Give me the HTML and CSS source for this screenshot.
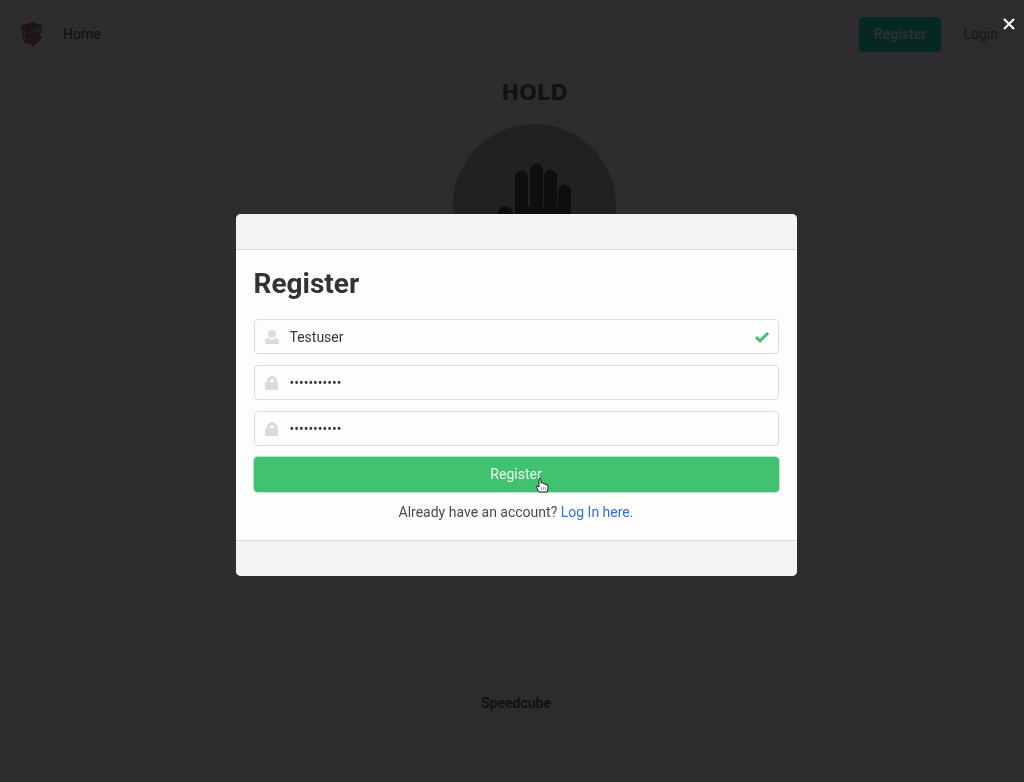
FILE: index.html
```html
<!DOCTYPE html>
<html lang="en">
<head>
<meta charset="utf-8">
<meta name="viewport" content="width=device-width, initial-scale=1">
<title>Speedcube</title>
<link rel="stylesheet" href="styles.css">
</head>
<body>
<div class="page">
  <nav class="navbar">
    <a class="brand" href="#" aria-label="Speedcube">
      <svg width="24" height="26" viewBox="0 0 24 26">
        <path fill="#151417" d="M12 1l4 1 1 1 5 1v4l-1 11-4 3-5 3-9-5L1 7l1-3 5-1z"/>
        <path fill="#2e1019" d="M11 1l4 1-3 2-4-1zM6 4l4 1-3 2-4-1zM16 4l4 1-3 2-4-1zM11 6l4 1-3 2-4-1zM6 11l5 1v4l-5-1zM7 17l4 1v5l-4-2zM12 13l5-1v4l-5 2zM12 18l3-1v4l-3 2zM17 14l3-1-1 4-2 1z"/>
        <path fill="#0d2c1f" d="M1 7l4 2 1 4-4-2zM3 15l3 1v4l-3-2zM13 9l4-1v3l-4 1zM18 7l4-1-1 5-3 1zM7 21l3 1v2l-3-2z"/>
        <path fill="#182052" d="M10 10h2v2h-2zM16 18l3-1v2l-2 2zM3 12l2 1v1l-2-1z"/>
        <path fill="#38382a" d="M20 12h1v3h-1zM4 12h1v1H4zM11 23h1v2h-1z"/>
      </svg>
    </a>
    <a class="nav-link" href="#">Home</a>
    <div class="nav-actions">
      <button class="nav-button nav-button-primary" type="button">Register</button>
      <button class="nav-button" type="button">Login</button>
    </div>
  </nav>
  <main class="timer">
    <h2 class="timer-status">HOLD</h2>
    <div class="timer-pad">
      <svg width="163" height="163" viewBox="0 0 163 163" aria-hidden="true">
        <path fill="#0e0d0f" d="M62 95V53a6.500 6.500 0 0 1 13 0v29h2V46a6.500 6.500 0 0 1 13 0v36h1V52a6.500 6.500 0 0 1 13 0v30h1V67a6.500 6.500 0 0 1 13 0v36c0 14-8 22-22 22H82c-10 0-16-5-21-12L46 93c-5-8 6-15 12-8z"/>
      </svg>
    </div>
  </main>
  <footer class="footer"><strong>Speedcube</strong></footer>
</div>

<div class="modal">
  <section class="modal-card" role="dialog" aria-modal="true" aria-labelledby="register-title">
    <header class="modal-bar modal-head"></header>
    <form class="modal-body">
      <h1 class="title" id="register-title">Register</h1>
      <div class="field">
        <svg class="field-icon" width="14" height="16" viewBox="0 0 14 16" aria-hidden="true"><circle cx="7" cy="5" r="4"/><path d="M3 9c2 2 6 2 8 0 2 0 3 2 3 4v1q0 1-1 1H1q-1 0-1-1v-1c0-2 1-4 3-4z"/></svg>
        <input class="input" type="text" aria-label="Username" value="Testuser">
        <svg class="field-check" width="16" height="16" viewBox="0 0 16 16" aria-hidden="true"><path d="M2 8l4 4 8-8"/></svg>
      </div>
      <div class="field">
        <svg class="field-icon" width="14" height="16" viewBox="0 0 14 16" aria-hidden="true"><path fill-rule="evenodd" d="M2 7V6a5 5 0 0 1 10 0v1q1 0 1 1v6q0 1-1 1H1q-1 0-1-1V8q0-1 1-1zm3 0h4V6a2 2 0 0 0-4 0z"/></svg>
        <input class="input" type="password" aria-label="Password" value="speedcubers">
      </div>
      <div class="field">
        <svg class="field-icon" width="14" height="16" viewBox="0 0 14 16" aria-hidden="true"><path fill-rule="evenodd" d="M2 7V6a5 5 0 0 1 10 0v1q1 0 1 1v6q0 1-1 1H1q-1 0-1-1V8q0-1 1-1zm3 0h4V6a2 2 0 0 0-4 0z"/></svg>
        <input class="input" type="password" aria-label="Confirm password" value="speedcubers">
      </div>
      <div class="submit-row">
        <button class="submit" type="button">Register</button>
        <svg class="pointer" width="14" height="16" viewBox="0 0 14 16" aria-hidden="true"><path fill="#fff" stroke="#222" d="M4 9V2q1-2 2 0v4q2-1 3 1 1-1 2 1 2-1 2 1v3l-1 3H4l-3-5q0-2 3 0z"/><path fill="none" stroke="#aaa" d="M6.500 10v3M8.500 10v3M10.500 10v3"/></svg>
      </div>
      <p class="switch">Already have an account? <a href="#">Log In here.</a></p>
    </form>
    <footer class="modal-bar modal-foot"></footer>
  </section>
  <button class="close" type="button" aria-label="Close"><svg width="12" height="12" viewBox="0 0 12 12"><path d="M1 1l10 10M11 1 1 11"/></svg></button>
</div>
</body>
</html>
```
FILE: styles.css
```css
*, *::before, *::after { box-sizing: border-box; }

body {
  margin: 0;
  font: 14px/21px Roboto, "Liberation Sans", sans-serif;
  color: #4a4a4a;
  background: #2e2c2f;
}

h1, h2, p { margin: 0; }
button, input { font: inherit; }
svg { display: block; }

.page {
  display: flex;
  flex-direction: column;
  min-height: 100vh;
  color: #121113;
}

.navbar {
  display: flex;
  align-items: center;
  height: 68px;
  padding: 0 12px 0 20px;
}

.nav-link {
  margin-left: 19px;
  color: #121113;
  text-decoration: none;
}

.nav-actions {
  display: flex;
  gap: 8px;
  margin-left: auto;
}

.nav-button {
  height: 35px;
  padding: 0 14px;
  border: 0;
  border-radius: 4px;
  color: #171618;
  background: #2d2b2e;
}

.nav-button-primary {
  padding: 0 15px;
  font-weight: 700;
  color: #2b3231;
  background: #062822;
}

.timer {
  display: flex;
  flex: 1;
  flex-direction: column;
  align-items: center;
  gap: 19px;
  padding: 13px 0 0 45px;
}

.timer-status {
  font: 700 21px/24px "DejaVu Sans", sans-serif;
}

.timer-pad {
  border-radius: 50%;
  background: #222023;
}

.footer {
  padding: 41px 0 68px 8px;
  text-align: center;
  background: #2d2b2e;
}

.modal {
  position: fixed;
  inset: 0;
  display: flex;
  align-items: center;
  justify-content: center;
  padding: 8px 0 0 8px;
}

.modal-card {
  width: 100%;
  max-width: 561px;
  overflow: hidden;
  border-radius: 5px;
  background: #fefdfe;
}

.modal-bar {
  height: 36px;
  background: #f4f3f5;
}

.modal-head { border-bottom: 1px solid #dbdadc; }
.modal-foot { border-top: 1px solid #dbdadc; }

.modal-body { padding: 18px 18px 17px; }

.title {
  margin-bottom: 19px;
  font-size: 28px;
  line-height: 32px;
  font-weight: 700;
  color: #333;
}

.field {
  position: relative;
  margin-bottom: 11px;
}

.input {
  display: block;
  width: 100%;
  height: 35px;
  padding: 0 35px;
  border: 1px solid #dbdadc;
  border-radius: 4px;
  outline: 0;
  color: #363636;
  background: #fefdfe;
}

.field-icon {
  position: absolute;
  top: 10px;
  left: 11px;
  fill: #dbdadc;
}

.field-check {
  position: absolute;
  top: 10px;
  right: 9px;
  fill: none;
  stroke: #40c270;
  stroke-width: 3px;
}

.submit-row { position: relative; }

.submit {
  display: block;
  width: 100%;
  height: 35px;
  border: 0;
  border-radius: 4px;
  color: #e9f9ef;
  background: #40c270;
  box-shadow: 0 0 0 1px #b5e9c7;
}

.pointer {
  position: absolute;
  top: 20px;
  left: calc(50% + 19px);
}

.switch {
  margin-top: 10px;
  text-align: center;
}

.switch a {
  color: #3273cc;
  text-decoration: none;
}

.close {
  position: absolute;
  top: 12px;
  right: 3px;
  padding: 6px;
  border: 0;
  background: none;
}

.close svg {
  fill: none;
  stroke: #fff;
  stroke-width: 2px;
}
```
